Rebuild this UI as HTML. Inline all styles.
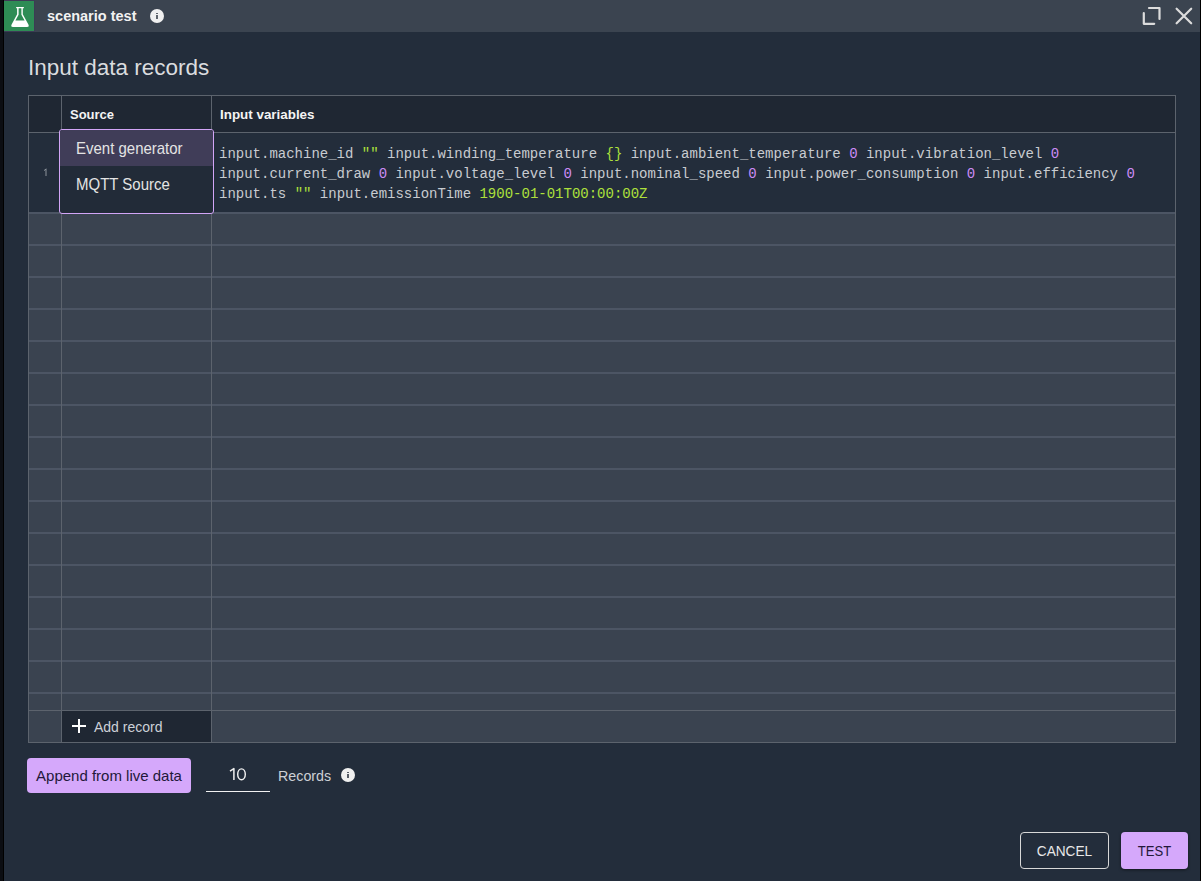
<!DOCTYPE html>
<html><head><meta charset="utf-8">
<style>
*{box-sizing:border-box;margin:0;padding:0}
html,body{width:1201px;height:881px;overflow:hidden;background:#000;font-family:"Liberation Sans",sans-serif}
.abs{position:absolute}
#lstrip{left:0;top:0;width:3px;height:881px;background:#0b0d12}
#dlg{left:4px;top:0;width:1196px;height:881px;background:#232d3b}
#hdr{left:4px;top:0;width:1196px;height:32px;background:#3b4450}
#ibox{left:4px;top:0;width:31px;height:32px;background:#3d3b55}
#green{left:4px;top:1px;width:30px;height:30px;background:#2e8c55}
#title{left:47px;top:7px;font-size:14.5px;font-weight:bold;color:#f2f2f2;line-height:18px;white-space:nowrap}
#h1{left:28px;top:55px;font-size:22.5px;color:#dadcdf;line-height:26px;white-space:nowrap}
/* table */
#tbl{left:28px;top:95px;width:1148px;height:648px;background:#3a4350;border:1px solid #5c636d}
#thead{left:29px;top:96px;width:1146px;height:36px;background:#1f2733}
#row1{left:29px;top:133px;width:1146px;height:79px;background:#232d3b}
.hl{position:absolute;left:29px;width:1146px;height:1px;background:#5c636d}
.hl2{position:absolute;left:29px;width:1146px;height:2px;background:#4c5564}
.vl{position:absolute;width:1px;background:#5c636d}
.th{position:absolute;top:107px;font-size:13px;font-weight:bold;color:#f4f4f4;line-height:16px;white-space:nowrap}
#code{left:219px;top:144px;font-family:"Liberation Mono",monospace;font-size:14px;line-height:20px;color:#c8cbd0;white-space:pre}
.g{color:#ade03c}
.p{color:#cc8cf6}
#rn{left:42px;top:167px;font-size:9px;color:#8a9099}
#dd{left:59px;top:129px;width:155px;height:85px;background:#222b38;border:1px solid #d2a5f7;border-radius:3px;overflow:hidden}
#ddhl{left:0;top:0;width:153px;height:36px;background:#403d58}
.ddi{position:absolute;left:16px;font-size:15.7px;color:#e4e4e4;white-space:nowrap;line-height:18px;transform:scaleX(.955);transform-origin:0 0}
#addcell{left:62px;top:711px;width:149px;height:31px;background:#1f2733}
#addtxt{left:94px;top:719px;font-size:14px;color:#cdd1d8;white-space:nowrap;line-height:16px}
#append{left:27px;top:758px;width:164px;height:35px;background:#d5a8fb;border-radius:4px;color:#23183a;font-size:15px;line-height:35px;text-align:center;white-space:nowrap}
#ten{left:206px;top:765px;width:64px;text-align:center;font-size:17px;color:#e8e8e8;line-height:20px}
#uline{left:206px;top:791px;width:64px;height:1px;background:#f2f2f2}
#records{left:278px;top:767px;font-size:15.2px;color:#cdd0d5;line-height:18px;white-space:nowrap;transform:scaleX(.94);transform-origin:0 0}
#cancel{left:1020px;top:832px;width:89px;height:37px;border:1px solid #d8d8d8;border-radius:4px}
#canceltxt{left:1020px;top:833px;width:89px;color:#e8e8e8;font-size:15px;line-height:35px;text-align:center;transform:scaleX(.91)}
#test{left:1121px;top:832px;width:67px;height:37px;background:#d5a8fb;border-radius:4px;box-shadow:0 1px 3px rgba(0,0,0,.5)}
#testtxt{left:1121px;top:833px;width:67px;color:#23183a;font-size:15px;line-height:35px;text-align:center;transform:scaleX(.87)}
#rstrip{left:1200px;top:0;width:1px;height:881px;background:#000}
</style></head><body>
<div id="lstrip" class="abs"></div>
<div id="dlg" class="abs"></div>
<div id="hdr" class="abs"></div>
<div id="ibox" class="abs"></div>
<div id="green" class="abs">
<svg width="30" height="30" viewBox="0 0 30 30"><path fill="#fff" fill-rule="evenodd" d="M12.3 6 H19.7 Q20.2 6.6 19.7 7.2 H18.8 V13.2 L24.4 23.5 Q25.5 26 23 26 H9 Q6.5 26 7.6 23.5 L13.1 13.2 V7.2 H12.3 Q11.8 6.6 12.3 6 Z M14.6 7.2 H17.4 V13.7 L20.6 19.6 H11.4 L14.6 13.7 Z"/></svg>
</div>
<div id="title" class="abs">scenario test</div>
<svg class="abs" style="left:150px;top:9px" width="14" height="14" viewBox="0 0 14 14"><circle cx="7" cy="7" r="7" fill="#f0f0f0"/><rect x="6" y="4" width="2" height="1" fill="#5e646c"/><rect x="6" y="6" width="2" height="4" fill="#5e646c"/></svg>
<svg class="abs" style="left:1140px;top:5px" width="24" height="24" viewBox="0 0 24 24"><path d="M9 3 H19.5 V14 M3.8 8.2 V18.8 H14.2" fill="none" stroke="#dcdcdc" stroke-width="2.2" stroke-linecap="round" stroke-linejoin="round"/></svg>
<svg class="abs" style="left:1172px;top:4px" width="24" height="24" viewBox="0 0 24 24"><path d="M4.6 4.7 L19.2 19.3 M19.2 4.7 L4.6 19.3" fill="none" stroke="#dcdcdc" stroke-width="2.2" stroke-linecap="round" stroke-linejoin="round"/></svg>
<div id="h1" class="abs">Input data records</div>

<div id="tbl" class="abs"></div>
<div id="thead" class="abs"></div>
<div id="row1" class="abs"></div>
<div class="hl" style="top:132px"></div>
<div class="hl2" style="top:212px"></div>
<div class="hl2" style="top:244px"></div>
<div class="hl2" style="top:276px"></div>
<div class="hl2" style="top:308px"></div>
<div class="hl2" style="top:340px"></div>
<div class="hl2" style="top:372px"></div>
<div class="hl2" style="top:404px"></div>
<div class="hl2" style="top:436px"></div>
<div class="hl2" style="top:468px"></div>
<div class="hl2" style="top:500px"></div>
<div class="hl2" style="top:532px"></div>
<div class="hl2" style="top:564px"></div>
<div class="hl2" style="top:596px"></div>
<div class="hl2" style="top:628px"></div>
<div class="hl2" style="top:660px"></div>
<div class="hl2" style="top:692px"></div>
<div class="hl" style="top:710px"></div>
<div class="vl" style="left:61px;top:96px;height:646px"></div>
<div class="vl" style="left:211px;top:96px;height:646px"></div>
<div id="addcell" class="abs"></div>
<div class="th" style="left:70px">Source</div>
<div class="th" style="left:220px;font-size:13.4px">Input variables</div>
<svg class="abs" style="left:43px;top:168px" width="5" height="9" viewBox="0 0 5 9"><path d="M3 1 V8" stroke="#8e949c" stroke-width="1"/><path d="M3.3 0.8 L1 2.6" stroke="#8e949c" stroke-width="1"/></svg>
<div id="code" class="abs">input.machine_id <span class="g">""</span> input.winding_temperature <span class="g">{}</span> input.ambient_temperature <span class="p">0</span> input.vibration_level <span class="p">0</span>
input.current_draw <span class="p">0</span> input.voltage_level <span class="p">0</span> input.nominal_speed <span class="p">0</span> input.power_consumption <span class="p">0</span> input.efficiency <span class="p">0</span>
input.ts <span class="g">""</span> input.emissionTime <span class="g">1900-01-01T00:00:00Z</span></div>
<div id="dd" class="abs">
  <div id="ddhl" class="abs"></div>
  <div class="ddi" style="top:10px">Event generator</div>
  <div class="ddi" style="top:46px">MQTT Source</div>
</div>
<svg class="abs" style="left:72px;top:719px" width="14" height="14" viewBox="0 0 14 14"><path d="M7 0 V14 M0 7 H14" stroke="#fff" stroke-width="2"/></svg>
<div id="addtxt" class="abs">Add record</div>

<div id="append" class="abs">Append from live data</div>
<svg class="abs" style="left:226px;top:765px" width="24" height="18" viewBox="0 0 24 18"><path d="M4 6.2 L7.9 3.6 V15" fill="none" stroke="#f0f0f0" stroke-width="1.5" stroke-linejoin="round"/><ellipse cx="15.5" cy="9.3" rx="3.8" ry="5.4" fill="none" stroke="#f0f0f0" stroke-width="1.45"/></svg>
<div id="uline" class="abs"></div>
<div id="records" class="abs">Records</div>
<svg class="abs" style="left:341px;top:768px" width="14" height="14" viewBox="0 0 14 14"><circle cx="7" cy="7" r="7" fill="#f0f0f0"/><rect x="6" y="4" width="2" height="1" fill="#565c66"/><rect x="6" y="6" width="2" height="4" fill="#565c66"/></svg>
<div id="cancel" class="abs"></div><div id="canceltxt" class="abs">CANCEL</div>
<div id="test" class="abs"></div><div id="testtxt" class="abs">TEST</div>
<div id="rstrip" class="abs"></div>
</body></html>
